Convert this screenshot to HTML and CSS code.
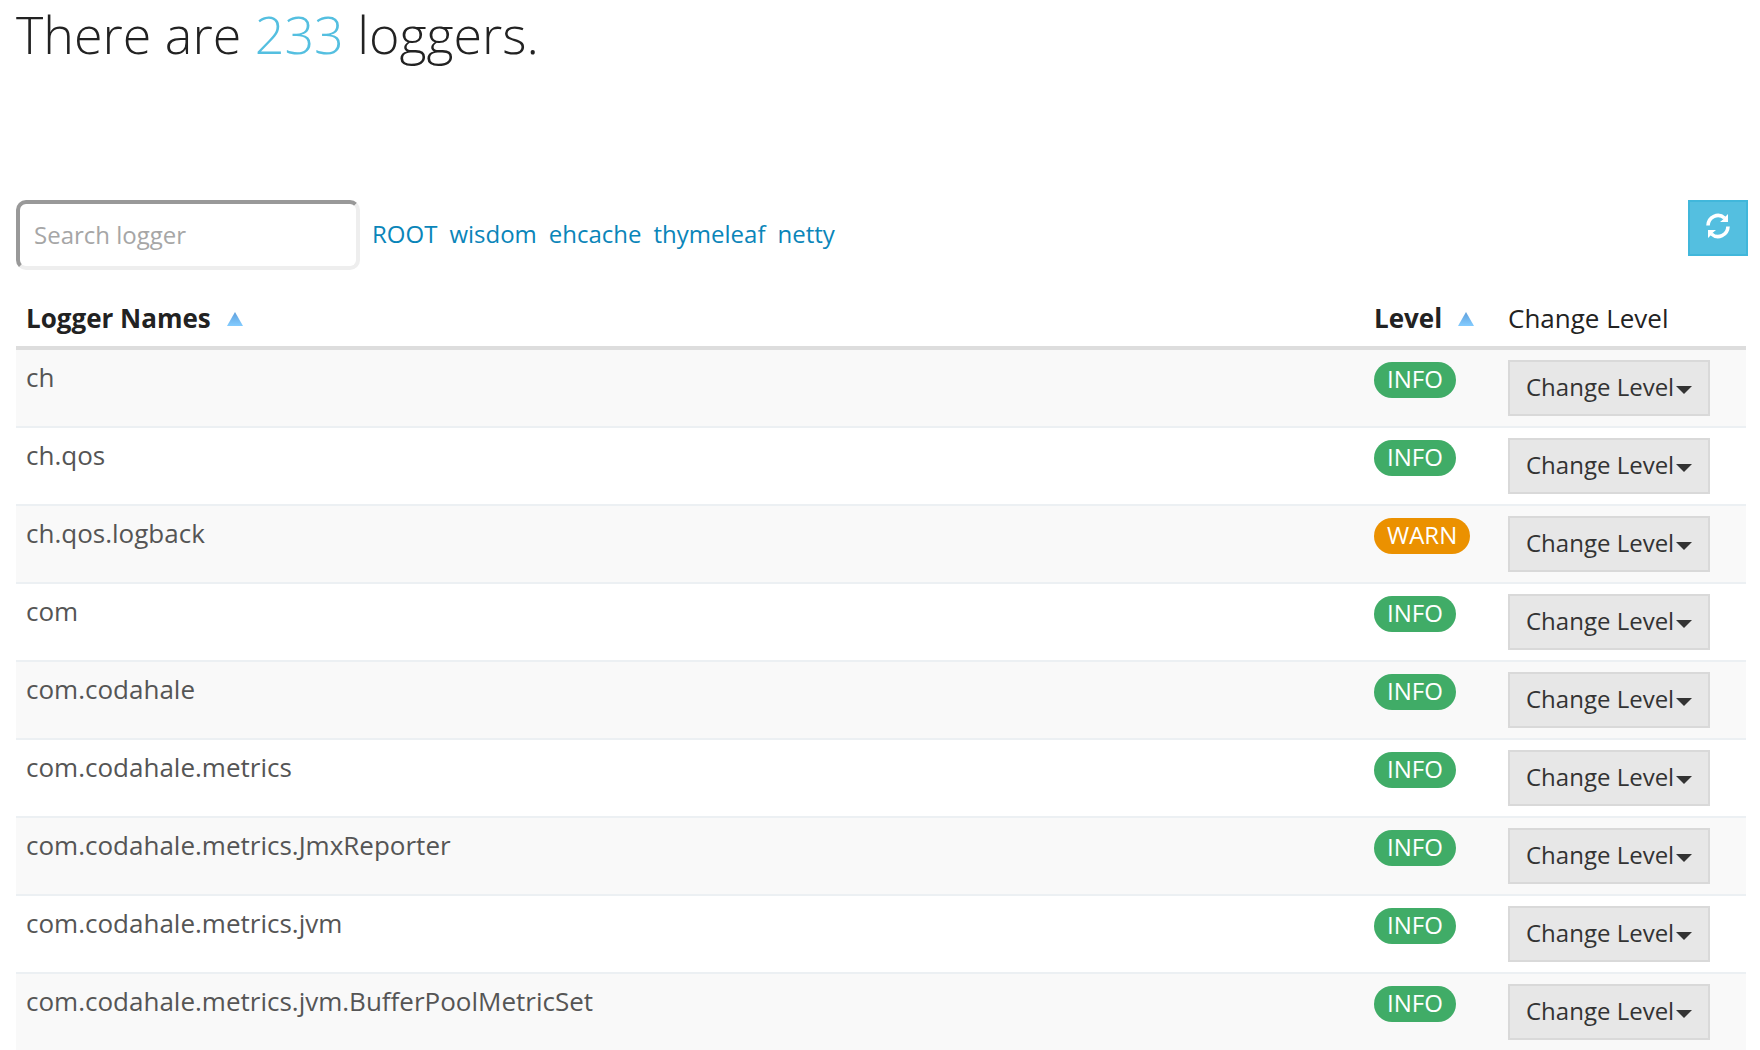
FILE: index.html
```html
<!DOCTYPE html>
<html lang="en">
<head>
<meta charset="utf-8">
<title>Loggers</title>
<link rel="stylesheet" href="styles.css">
</head>
<body>
<main class="page">
  <h1 class="title">There are <span class="count">233</span> loggers.</h1>

  <div class="toolbar">
    <input class="search" type="text" placeholder="Search logger" aria-label="Search logger">
    <nav class="filters">
      <a href="#root">ROOT</a>
      <a href="#wisdom">wisdom</a>
      <a href="#ehcache">ehcache</a>
      <a href="#thymeleaf">thymeleaf</a>
      <a href="#netty">netty</a>
    </nav>
    <button class="refresh" type="button" aria-label="Refresh">
      <svg width="24" height="26" viewBox="0 0 24 26" aria-hidden="true">
        <path d="M2 12.500A10 10.500 0 0 1 18.500 5M22 13.500A10 10.500 0 0 1 5.500 21" fill="none" stroke="#fff" stroke-width="3.600"/>
        <path d="M22 1V9H14L17 6.500L19 4ZM2 25V17H10L7 19.500L5 22Z" fill="#fff"/>
      </svg>
    </button>
  </div>

  <table class="loggers">
    <colgroup><col><col class="col-level"><col class="col-change"></colgroup>
    <thead>
      <tr>
        <th class="sorted" scope="col">Logger Names<svg class="sort" viewBox="0 0 16 14" aria-hidden="true"><defs><linearGradient id="sky" x1="0" y1="0" x2="0" y2="1"><stop offset="0" stop-color="#5f9fdc"/><stop offset="1" stop-color="#83ccff"/></linearGradient></defs><path d="M8 0L16 14H0Z" fill="url(#sky)"/></svg></th>
        <th class="sorted" scope="col">Level<svg class="sort" viewBox="0 0 16 14" aria-hidden="true"><path d="M8 0L16 14H0Z" fill="url(#sky)"/></svg></th>
        <th scope="col">Change Level</th>
      </tr>
    </thead>
    <tbody>
      <tr><td>ch</td><td><span class="badge">INFO</span></td><td><button class="change" type="button">Change Level</button></td></tr>
      <tr><td>ch.qos</td><td><span class="badge">INFO</span></td><td><button class="change" type="button">Change Level</button></td></tr>
      <tr><td>ch.qos.logback</td><td><span class="badge warn">WARN</span></td><td><button class="change" type="button">Change Level</button></td></tr>
      <tr><td>com</td><td><span class="badge">INFO</span></td><td><button class="change" type="button">Change Level</button></td></tr>
      <tr><td>com.codahale</td><td><span class="badge">INFO</span></td><td><button class="change" type="button">Change Level</button></td></tr>
      <tr><td>com.codahale.metrics</td><td><span class="badge">INFO</span></td><td><button class="change" type="button">Change Level</button></td></tr>
      <tr><td>com.codahale.metrics.JmxReporter</td><td><span class="badge">INFO</span></td><td><button class="change" type="button">Change Level</button></td></tr>
      <tr><td>com.codahale.metrics.jvm</td><td><span class="badge">INFO</span></td><td><button class="change" type="button">Change Level</button></td></tr>
      <tr><td>com.codahale.metrics.jvm.BufferPoolMetricSet</td><td><span class="badge">INFO</span></td><td><button class="change" type="button">Change Level</button></td></tr>
    </tbody>
  </table>
</main>
</body>
</html>
```
FILE: styles.css
```css
* { box-sizing: border-box; }

body {
  margin: 0;
  background: #fff;
  color: #222;
  font: 26px/36px "Open Sans", sans-serif;
}

.page { padding: 0 12px 0 16px; }

.title {
  margin: 0 0 128px;
  padding-bottom: 4px;
  font-size: 52px;
  line-height: 68px;
  font-weight: 300;
}

.count { color: #54bfe0; }

.toolbar {
  display: flex;
  align-items: flex-start;
  margin-bottom: 20px;
}

.search {
  width: 344px;
  height: 70px;
  padding: 0 14px 2px;
  border: 4px solid;
  border-color: #999 #eee #eee #999;
  border-radius: 10px;
  background: #fff;
  color: #444;
  font: inherit;
  font-size: 24px;
}

.search::placeholder { color: #a6a6a6; opacity: 1; }

.filters {
  display: flex;
  gap: 12px;
  padding: 16px 0 0 12px;
  font-size: 24px;
}

.filters a { color: #0a85b9; text-decoration: none; }

.refresh {
  width: 60px;
  height: 56px;
  margin-left: auto;
  padding: 0 0 4px;
  border: 2px solid #41b7db;
  background: #54bfe0;
}

.refresh svg { display: block; margin: 0 auto; }

.loggers {
  width: calc(100% - 2px);
  table-layout: fixed;
  border-collapse: separate;
  border-spacing: 0;
}

.col-level { width: 134px; }
.col-change { width: 248px; }

th {
  height: 60px;
  padding: 9px 10px;
  border-bottom: 4px solid #ddd;
  font-weight: 400;
  text-align: left;
  white-space: nowrap;
}

th.sorted { font-weight: 700; }

.sort {
  width: 16px;
  height: 14px;
  margin-left: 16px;
  vertical-align: 2px;
}

td {
  padding: 10px;
  border-top: 2px solid #ecf0f3;
  color: #555;
  line-height: 34px;
  vertical-align: top;
}

tbody tr:first-child td { border-top: 0; }
tbody tr:nth-child(odd) { background: #f9f9f9; }

.badge {
  display: block;
  width: fit-content;
  margin-top: 2px;
  padding: 0 13px 2px;
  border-radius: 18px;
  background: #40ac67;
  color: #fff;
  font-size: 24px;
}

.warn { background: #eb9100; }

.change {
  display: flex;
  align-items: center;
  gap: 2px;
  height: 56px;
  padding: 0 16px 2px;
  border: 2px solid #d9d9d9;
  background: #e7e7e7;
  color: #333;
  font: inherit;
  font-size: 24px;
  white-space: nowrap;
}

.change::after {
  content: "";
  margin-top: 6px;
  border: 8px solid transparent;
  border-top-color: #333;
  border-bottom: 0;
}
```
